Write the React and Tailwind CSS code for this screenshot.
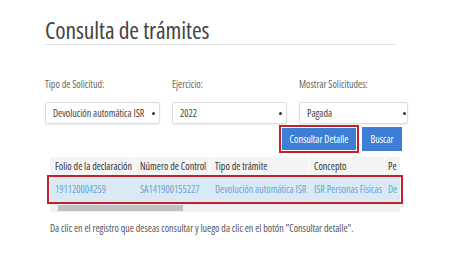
export default function App() {
  const f = { fontFamily: '"Open Sans", "Liberation Sans", sans-serif', fontStretch: '75%' };
  return (
    <div className="w-[474px] h-[266px] bg-white overflow-hidden relative" style={f}>
      <div className="pl-[45px] pt-[16px]">
        <h1 className="text-[23.5px] leading-[28px] text-[#444] font-normal tracking-[-0.1px]">Consulta de trámites</h1>
        <div className="w-[350px] border-t border-[#e3e3e3] mt-[0px]" />
        <div className="flex gap-[12px] mt-[32px] text-[10px] leading-[14px] text-[#666]">
          <div className="w-[115px]">Tipo de Solicitud:</div>
          <div className="w-[115px]">Ejercicio:</div>
          <div className="w-[109px]">Mostrar Solicitudes:</div>
        </div>
        <div className="flex gap-[12px] mt-[11px] text-[10px] text-[#444]">
          <div className="w-[115px] h-[22px] border border-[#ddd] rounded-[2px] flex items-center justify-between pl-[7px] pr-[4px] shadow-[0_1px_2px_rgba(0,0,0,0.08)]">
            <span>Devolución automática ISR</span>
            <span className="w-[3px] h-[3px] bg-[#333] rounded-full" />
          </div>
          <div className="w-[115px] h-[22px] border border-[#ddd] rounded-[2px] flex items-center justify-between pl-[7px] pr-[4px] shadow-[0_1px_2px_rgba(0,0,0,0.08)]">
            <span>2022</span>
            <span className="w-[3px] h-[3px] bg-[#333] rounded-full" />
          </div>
          <div className="w-[109px] h-[22px] border border-[#ddd] rounded-[2px] flex items-center justify-between pl-[7px] pr-[1px] shadow-[0_1px_2px_rgba(0,0,0,0.08)]">
            <span>Pagada</span>
            <span className="w-[3px] h-[3px] bg-[#333] rounded-full" />
          </div>
        </div>
        <div className="flex items-center w-[357px] justify-end gap-[3px] mt-[1px] text-[10px] text-white">
          <div className="border-2 border-[#c4202b] p-[1px]">
            <div className="w-[74px] h-[22px] bg-[#3d7fd6] flex items-center justify-center whitespace-nowrap">Consultar Detalle</div>
          </div>
          <div className="w-[40px] h-[24px] bg-[#3d7fd6] flex items-center justify-center">Buscar</div>
        </div>
        <div className="ml-[5px] w-[350px] text-[10px] mt-[4px] relative whitespace-nowrap">
          <div className="flex h-[18px] bg-[#f4f4f4] text-[#333] font-medium items-center">
            <div className="w-[85px] pl-[5px] border-r border-white h-full flex items-center">Folio de la declaración</div>
            <div className="w-[75px] pl-[5px] border-r border-white h-full flex items-center">Número de Control</div>
            <div className="w-[99px] pl-[5px] border-r border-white h-full flex items-center">Tipo de trámite</div>
            <div className="w-[76px] pl-[5px] border-r border-white h-full flex items-center">Concepto</div>
            <div className="flex-1 pl-[3px] h-full flex items-center overflow-hidden">Pe</div>
          </div>
          <div className="flex h-[29px] bg-[#d9eaf5] text-[#6aa3d6] items-center">
            <div className="w-[85px] pl-[5px]">191120004259</div>
            <div className="w-[75px] pl-[5px]">SA141900155227</div>
            <div className="w-[99px] pl-[5px]">Devolución automática ISR</div>
            <div className="w-[76px] pl-[5px]">ISR Personas Físicas</div>
            <div className="flex-1 pl-[3px] overflow-hidden">De</div>
          </div>
          <div className="absolute left-[-3px] top-[18px] w-[356px] h-[29px] border-2 border-[#c4202b]" />
          <div className="h-[8px] bg-[#f1f1f1] flex items-center">
            <div className="ml-[8px] w-[125px] h-[6px] bg-[#c1c1c1]" />
          </div>
        </div>
        <div className="mt-[9px] ml-[5px] text-[10px] text-[#555]">Da clic en el registro que deseas consultar y luego da clic en el botón "Consultar detalle".</div>
      </div>
    </div>
  );
}
